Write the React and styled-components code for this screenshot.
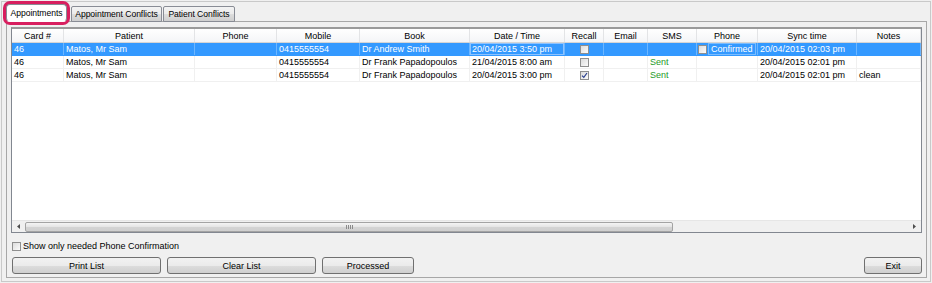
import React from "react";
import styled, { createGlobalStyle } from "styled-components";

const GlobalStyle = createGlobalStyle`
  html, body {
    margin: 0;
    padding: 0;
    background: #f0f0f0;
  }
  * {
    box-sizing: border-box;
  }
`;

const Screen = styled.div`
  width: 932px;
  height: 283px;
  padding: 1px;
  background: #f0f0f0;
  font-family: "Liberation Sans", Arial, sans-serif;
  font-size: 9px;
  color: #000;
`;

const Frame = styled.div`
  height: 281px;
  border: 1px solid #c9c9c9;
  padding: 2px 3px 3px 4px;
  display: flex;
  flex-direction: column;
`;

const TabStrip = styled.div`
  display: flex;
  align-items: flex-end;
  height: 18px;
  margin-bottom: -1px;
`;

const Tab = styled.div`
  position: relative;
  display: flex;
  align-items: center;
  justify-content: center;
  height: ${(p) => (p.active ? "18px" : "16px")};
  width: ${(p) => p.w}px;
  margin-right: ${(p) => (p.active ? "4px" : "1px")};
  border: 1px solid #898c95;
  border-bottom: ${(p) => (p.active ? "1px solid #fff" : "1px solid #898c95")};
  background: ${(p) =>
    p.active ? "#fff" : "linear-gradient(#f3f3f3, #ebebeb 50%, #dddddd 51%, #cfcfcf)"};
  z-index: ${(p) => (p.active ? 1 : 0)};
  border-radius: ${(p) => (p.active ? "4px" : "2px 2px 0 0")};
  box-shadow: ${(p) => (p.active ? "0 0 0 3px #d81f5f" : "none")};
  font-size: 8.6px;
  letter-spacing: -0.05px;
  white-space: nowrap;
`;

const Panel = styled.div`
  height: 257px;
  border: 1px solid #a7a7a7;
  padding: 5px 4px 3px 4px;
  display: flex;
  flex-direction: column;
`;

const Grid = styled.div`
  height: 206px;
  border: 1px solid #828790;
  border-top: 2px solid #9a9a9a;
  background: #fff;
  display: flex;
  flex-direction: column;
`;

const HeaderRow = styled.div`
  display: flex;
  height: 14px;
  background: linear-gradient(#ffffff, #f4f5f7);
  border-bottom: 1px solid #d5d5d5;
`;

const HeadCell = styled.div`
  width: ${(p) => p.w}px;
  flex: none;
  display: flex;
  align-items: center;
  justify-content: center;
  border-right: 1px solid #e3e4e6;
  white-space: nowrap;
  overflow: hidden;
`;

const Row = styled.div`
  display: flex;
  height: 13px;
  background: ${(p) => (p.selected ? "#3399ff" : "#fff")};
  color: ${(p) => (p.selected ? "#fff" : "#000")};
  border-bottom: 1px solid ${(p) => (p.selected ? "#3399ff" : "#f0f0f0")};
`;

const Cell = styled.div`
  width: ${(p) => p.w}px;
  flex: none;
  display: flex;
  align-items: center;
  justify-content: ${(p) => (p.center ? "center" : "flex-start")};
  padding-left: ${(p) => p.pad}px;
  border-right: 1px solid ${(p) => (p.selected ? "#6cb6ff" : "#f0f0f0")};
  box-shadow: ${(p) => (p.focus ? "inset 0 0 0 1px #8ec3ff" : "none")};
  white-space: nowrap;
  overflow: hidden;
  color: ${(p) => p.tone || "inherit"};
`;

const FocusText = styled.span`
  margin-left: 2px;
  padding: 0 2px;
  outline: 1px solid rgba(255, 255, 255, 0.35);
  outline-offset: 0;
`;

const Box = styled.span`
  display: inline-flex;
  align-items: center;
  justify-content: center;
  width: 9px;
  height: 9px;
  flex: none;
  border: 1px solid #8f8f8f;
  background: linear-gradient(135deg, #dcdcdc, #fbfbfb);
`;

const Spacer = styled.div`
  flex: 1;
`;

const HScroll = styled.div`
  height: 12px;
  display: flex;
  align-items: center;
  background: #f0f0f0;
  border-top: 1px solid #e6e6e6;
`;

const Arrow = styled.div`
  width: 13px;
  height: 100%;
  display: flex;
  align-items: center;
  justify-content: center;
`;

const Thumb = styled.div`
  width: 648px;
  height: 10px;
  border: 1px solid #a3a3a3;
  border-radius: 2px;
  background: linear-gradient(#f4f4f4, #e4e4e4 50%, #d4d4d4 51%, #cfcfcf);
  display: flex;
  align-items: center;
  justify-content: center;
`;

const Grip = styled.div`
  display: flex;
  gap: 1px;
  span {
    width: 1px;
    height: 4px;
    background: #8a8a8a;
  }
`;

const CheckRow = styled.label`
  display: flex;
  align-items: center;
  gap: 2px;
  height: 10px;
  margin: 8px 0 0 1px;
`;

const ButtonRow = styled.div`
  display: flex;
  height: 17px;
  margin: 6px 0 0 1px;
  gap: 6px;
`;

const Button = styled.button`
  width: ${(p) => p.w}px;
  height: 17px;
  margin-left: ${(p) => (p.push ? "auto" : "0")};
  border: 1px solid #707070;
  border-radius: 3px;
  background: linear-gradient(#f2f2f2, #ebebeb 50%, #dddddd 51%, #cfcfcf);
  font-family: "Liberation Sans", Arial, sans-serif;
  font-size: 9px;
  color: #000;
  padding: 0;
`;

const cols = [
  { key: "card", label: "Card #", w: 52 },
  { key: "patient", label: "Patient", w: 131 },
  { key: "phone", label: "Phone", w: 82 },
  { key: "mobile", label: "Mobile", w: 83 },
  { key: "book", label: "Book", w: 110 },
  { key: "date", label: "Date / Time", w: 95 },
  { key: "recall", label: "Recall", w: 39 },
  { key: "email", label: "Email", w: 44 },
  { key: "sms", label: "SMS", w: 49 },
  { key: "pconf", label: "Phone", w: 61 },
  { key: "sync", label: "Sync time", w: 99 },
  { key: "notes", label: "Notes", w: 64 },
];

const rows = [
  {
    card: "46",
    patient: "Matos, Mr Sam",
    mobile: "0415555554",
    book: "Dr Andrew Smith",
    date: "20/04/2015 3:50 pm",
    recall: false,
    sms: "",
    confirmed: true,
    sync: "20/04/2015 02:03 pm",
    notes: "",
  },
  {
    card: "46",
    patient: "Matos, Mr Sam",
    mobile: "0415555554",
    book: "Dr Frank Papadopoulos",
    date: "21/04/2015 8:00 am",
    recall: false,
    sms: "Sent",
    sync: "20/04/2015 02:01 pm",
    notes: "",
  },
  {
    card: "46",
    patient: "Matos, Mr Sam",
    mobile: "0415555554",
    book: "Dr Frank Papadopoulos",
    date: "20/04/2015 3:00 pm",
    recall: true,
    sms: "Sent",
    sync: "20/04/2015 02:01 pm",
    notes: "clean",
  },
];

const Check = ({ checked }) => (
  <Box>
    {checked && (
      <svg width="7" height="7" viewBox="0 0 7 7">
        <path d="M1 3.6 L2.8 5.4 L6 1" fill="none" stroke="#2a3f8f" strokeWidth="1.2" />
      </svg>
    )}
  </Box>
);

const GridRow = ({ row, selected }) => (
  <Row selected={selected}>
    {cols.map((c) => {
      let content = row[c.key];
      if (c.key === "recall") content = <Check checked={row.recall} />;
      if (c.key === "pconf")
        content = row.confirmed ? (
          <>
            <Check />
            <FocusText>Confirmed</FocusText>
          </>
        ) : null;
      return (
        <Cell
          key={c.key}
          w={c.w}
          pad={c.key === "recall" ? 0 : c.key === "pconf" ? 1 : 2}
          selected={selected}
          center={c.key === "recall"}
          focus={selected && c.key === "date"}
          tone={c.key === "sms" ? "#1f9a28" : undefined}
        >
          {content}
        </Cell>
      );
    })}
  </Row>
);

export default function App() {
  return (
    <Screen>
      <GlobalStyle />
      <Frame>
        <TabStrip>
          <Tab active w={61}>Appointments</Tab>
          <Tab w={91}>Appointment Conflicts</Tab>
          <Tab w={72}>Patient Conflicts</Tab>
        </TabStrip>
        <Panel>
          <Grid>
            <HeaderRow>
              {cols.map((c) => (
                <HeadCell key={c.key} w={c.w}>
                  {c.label}
                </HeadCell>
              ))}
            </HeaderRow>
            {rows.map((r, i) => (
              <GridRow key={i} row={r} selected={i === 0} />
            ))}
            <Spacer />
            <HScroll>
              <Arrow>
                <svg width="3" height="5" viewBox="0 0 3 5">
                  <path d="M3 0 L0 2.5 L3 5 Z" fill="#4d4d4d" />
                </svg>
              </Arrow>
              <Thumb>
                <Grip>
                  <span />
                  <span />
                  <span />
                  <span />
                </Grip>
              </Thumb>
              <Spacer />
              <Arrow>
                <svg width="3" height="5" viewBox="0 0 3 5">
                  <path d="M0 0 L3 2.5 L0 5 Z" fill="#4d4d4d" />
                </svg>
              </Arrow>
            </HScroll>
          </Grid>
          <CheckRow>
            <Check />
            <span>Show only needed Phone Confirmation</span>
          </CheckRow>
          <ButtonRow>
            <Button w={149}>Print List</Button>
            <Button w={149}>Clear List</Button>
            <Button w={92}>Processed</Button>
            <Button w={58} push>
              Exit
            </Button>
          </ButtonRow>
        </Panel>
      </Frame>
    </Screen>
  );
}
